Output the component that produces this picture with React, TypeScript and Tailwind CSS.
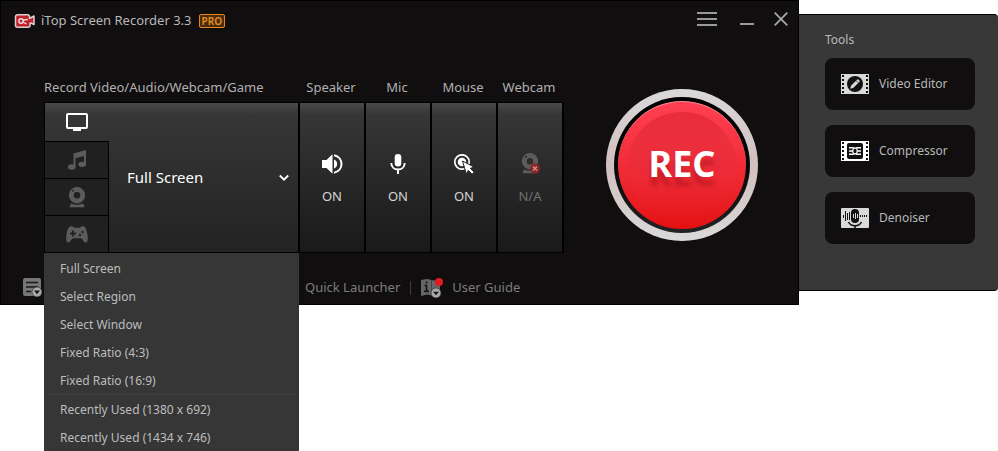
import { useState } from 'react'
import type { ReactNode } from 'react'

const recentSizes = ['Recently Used (1380 x 692)', 'Recently Used (1434 x 746)']
const captureModes = ['Full Screen', 'Select Region', 'Select Window', 'Fixed Ratio (4:3)', 'Fixed Ratio (16:9)']

function LogoIcon() {
  return (
    <svg width="22" height="16" viewBox="0 0 22 16" aria-hidden="true">
      <path d="M3.500 1.800h10a2 2 0 0 1 2 2v1.700l4.500-2.500v8.500l-3-1.500-1 .5v1.700a2 2 0 0 1-2 2H3.500a2 2 0 0 1-2-2v-8.400a2 2 0 0 1 2-2z" fill="#c4202c" stroke="#d6d2d2" strokeWidth="1.500" strokeLinejoin="round" />
      <circle cx="7" cy="8" r="2.200" fill="none" stroke="#e8dede" strokeWidth="1.400" />
      <path d="M8.800 9l3.700 2M8.800 7c2 0 3-.5 5-.5" fill="none" stroke="#e8dede" strokeWidth="1.400" />
    </svg>
  )
}

function MonitorIcon() {
  return (
    <svg width="22" height="18" viewBox="0 0 22 18" aria-hidden="true">
      <rect x="1" y="1" width="20" height="14" rx="1" fill="none" stroke="#fff" strokeWidth="2" />
      <path d="M7 15h8v3H7z" fill="#fff" />
    </svg>
  )
}

function MusicIcon() {
  return (
    <svg width="20" height="20" viewBox="0 0 20 20" fill="#5c5c5c" aria-hidden="true">
      <path d="M6.500 3.500L19 0v14h-2V6L8.500 8.300V17h-2z" />
      <ellipse cx="4.700" cy="17" rx="3.800" ry="2.700" />
      <ellipse cx="15.200" cy="14.300" rx="3.800" ry="2.600" />
    </svg>
  )
}

function WebcamIcon({ muted = false }: { muted?: boolean }) {
  return (
    <svg width="20" height="21" viewBox="0 0 20 21" aria-hidden="true">
      <path d="M10 0a8.200 8.200 0 1 1 0 16.400A8.200 8.200 0 0 1 10 0zm0 5a3.300 3.300 0 1 0 0 6.600A3.300 3.300 0 0 0 10 5z" fill="#5c5c5c" />
      <circle cx="6" cy="3.800" r="1" fill="#262626" />
      <path d="M4 16.500c4 1.700 8 1.700 12 0l1.700 3.700H2.300z" fill="#5c5c5c" />
      {muted && (
        <g>
          <circle cx="15" cy="15.500" r="4.900" fill="#8f2424" />
          <path d="M13 13.500l4 4m0-4l-4 4" stroke="#c09a9a" strokeWidth="1.200" />
        </g>
      )}
    </svg>
  )
}

function GamepadIcon() {
  return (
    <svg width="22" height="17" viewBox="0 0 22 17" aria-hidden="true">
      <path d="M5 .3c1.500 0 2 .5 3 1.400h6C15 .8 15.500.3 17 .3c3 0 4.600 6.500 4.800 12 0 2.500-.6 4.200-2.100 4.200-2 0-3-4.300-5.200-4.300h-7c-2.200 0-3.200 4.300-5.200 4.300-1.500 0-2.100-1.700-2.100-4.200C.4 6.800 2 .3 5 .3z" fill="#5c5c5c" />
      <path d="M7 4.500v6M4 7.500h6" stroke="#222" strokeWidth="1.800" />
      <g fill="#222">
        <circle cx="16.500" cy="6" r="1.200" />
        <circle cx="14" cy="9" r="1.200" />
      </g>
    </svg>
  )
}

function SpeakerIcon() {
  return (
    <svg width="22" height="20" viewBox="0 0 22 20" aria-hidden="true">
      <path d="M1 6h4.500L11.500.3v19.400l-6-5.700H1z" fill="#fff" />
      <path d="M13 5.500a4.800 4.800 0 0 1 0 9z" fill="#fff" />
      <path d="M13 1.300c10 2 10 15.400 0 17.400" fill="none" stroke="#fff" strokeWidth="2" />
    </svg>
  )
}

function MicIcon() {
  return (
    <svg width="16" height="20" viewBox="0 0 16 20" aria-hidden="true">
      <rect x="4.700" y="0" width="6.600" height="12.500" rx="3.300" fill="#fff" />
      <path d="M1.300 9c0 8.700 13.400 8.700 13.400 0M8 15.500V20" fill="none" stroke="#fff" strokeWidth="1.900" />
    </svg>
  )
}

function MouseIcon() {
  return (
    <svg width="22" height="20" viewBox="0 0 22 20" aria-hidden="true">
      <circle cx="9" cy="8" r="7.200" fill="none" stroke="#fff" strokeWidth="1.700" />
      <circle cx="9" cy="8" r="4.300" fill="#fff" />
      <path d="M9.500 7l11.500 6-3.600 1.400 3.800 3.800-2.200 2-3.700-3.800-2 3.600z" fill="#fff" stroke="#252525" strokeWidth="1" />
    </svg>
  )
}

// film strip frame shared by the editor and compressor icons
function FilmStrip({ fill, children }: { fill: string; children: ReactNode }) {
  return (
    <svg width="28" height="20" viewBox="0 0 28 20" aria-hidden="true">
      <path d="M0 0h28v20H0z" fill={fill} />
      <path d="M2 1v18M26 1v18" stroke="#111" strokeWidth="2" strokeDasharray="2 2" />
      {children}
    </svg>
  )
}

function VideoEditorIcon() {
  return (
    <FilmStrip fill="#d9d9d9">
      <circle cx="14" cy="10" r="8" fill="#111" />
      <path d="M9.200 14.800l.8-3 6.800-6.800 2.200 2.200-6.800 6.800z" fill="#d9d9d9" />
      <path d="M15 6.500l2.400 2.400" stroke="#111" strokeWidth=".7" />
    </FilmStrip>
  )
}

function CompressorIcon() {
  return (
    <FilmStrip fill="#fff">
      <rect x="6" y="2" width="16" height="16" rx="2" fill="#111" />
      <path d="M8 6.700h4l1.500 1M8 10h4M8 13.300h4l1.500-1M20 6.700h-4l-1.500 1M20 10h-4M20 13.300h-4l-1.500-1" fill="none" stroke="#fff" strokeWidth="1.400" />
      <ellipse cx="14" cy="10" rx="2.200" ry="3" fill="none" stroke="#fff" strokeWidth="1.100" />
    </FilmStrip>
  )
}

function DenoiserIcon() {
  return (
    <svg width="28" height="20" viewBox="0 0 28 20" aria-hidden="true">
      <rect width="28" height="20" rx="1" fill="#d9d9d9" />
      <path d="M2.500 7v3M4.500 3v10M6.500 5v7M8.500 4v8M19.500 7v2M21.500 7v2M23.500 7v2M25.500 7v2" stroke="#111" />
      <rect x="10" y="1" width="8" height="14" rx="4" fill="#111" />
      <path d="M12.500 6v4M14.500 5v6M16.500 6v4" stroke="#d9d9d9" />
      <path d="M7.500 14c2.500 5 10.500 5 13 0M14 17.500V20" fill="none" stroke="#111" strokeWidth="1.600" />
    </svg>
  )
}

function HistoryIcon() {
  return (
    <svg width="20" height="20" viewBox="0 0 20 20" aria-hidden="true">
      <rect x="1" y="0" width="18" height="18" rx="2" fill="#777" />
      <path d="M4 4.500h12M4 9h12M4 13.500h5" stroke="#181818" strokeWidth="1.500" />
      <circle cx="15" cy="14" r="5" fill="#aaa" stroke="#222" strokeWidth=".6" />
      <path d="M12 12.600h6L15 16.300z" fill="#181818" />
    </svg>
  )
}

function GuideIcon() {
  return (
    <svg width="22" height="20" viewBox="0 0 22 20" aria-hidden="true">
      <path d="M0 2l6-1 7 1.500L19 1v16l-6 1-7-1.500L0 18z" fill="#666" />
      <path d="M10.500 2v15" stroke="#444" />
      <path d="M3.500 7.500h2v5.500M3 13.300h5M5.500 3.500v2" fill="none" stroke="#151515" strokeWidth="1.700" />
      <circle cx="15" cy="15" r="5" fill="#aaa" stroke="#222" strokeWidth=".6" />
      <path d="M12 13.800h6L15 17.300z" fill="#181818" />
      <circle cx="18" cy="4" r="4" fill="#e31b23" />
    </svg>
  )
}

const sourceTabs = [
  { label: 'Audio', icon: <MusicIcon /> },
  { label: 'Webcam', icon: <WebcamIcon /> },
  { label: 'Game', icon: <GamepadIcon /> },
]

const devices = [
  { label: 'Speaker', state: 'ON', icon: <SpeakerIcon /> },
  { label: 'Mic', state: 'ON', icon: <MicIcon /> },
  { label: 'Mouse', state: 'ON', icon: <MouseIcon /> },
  { label: 'Webcam', state: 'N/A', icon: <WebcamIcon muted /> },
]

const tools = [
  { label: 'Video Editor', icon: <VideoEditorIcon /> },
  { label: 'Compressor', icon: <CompressorIcon /> },
  { label: 'Denoiser', icon: <DenoiserIcon /> },
]

function TitleBar() {
  return (
    <header className="flex h-10 items-center pr-[10px] pl-[13px]">
      <LogoIcon />
      <h1 className="ml-[5px] text-[13px] text-[#b9b9b9]">iTop Screen Recorder 3.3</h1>
      <span className="ml-[7px] flex h-[14px] items-center rounded-xs border border-[#e8861a] bg-[#4a2c10] px-[2px] text-[10px] font-semibold text-[#e8921a]">
        PRO
      </span>
      <div className="ml-auto flex items-center pb-[5px]">
        <button aria-label="Menu" className="mr-[23px]">
          <svg width="20" height="14" viewBox="0 0 20 14">
            <path d="M0 1h20M0 7h20M0 13h20" stroke="#9a9a9a" strokeWidth="2" />
          </svg>
        </button>
        <button aria-label="Minimize" className="mr-5">
          <svg width="14" height="14" viewBox="0 0 14 14">
            <path d="M0 12h14" stroke="#9a9a9a" strokeWidth="2" />
          </svg>
        </button>
        <button aria-label="Close">
          <svg width="14" height="14" viewBox="0 0 14 14">
            <path d="M.7.7l12.600 12.600M13.300.7L.7 13.300" stroke="#a6a6a6" strokeWidth="1.800" />
          </svg>
        </button>
      </div>
    </header>
  )
}

function ModeMenu({ onPick }: { onPick: (mode: string) => void }) {
  const item = 'block h-7 w-full px-4 pt-[2px] text-left text-xs text-[#bdbdbd] hover:bg-[#454545]'

  return (
    <div className="absolute top-full -left-px z-10 mt-px w-[255px] bg-[#363636] pt-px">
      {captureModes.map((mode) => (
        <button key={mode} className={item} onClick={() => onPick(mode)}>
          {mode}
        </button>
      ))}
      <div className="mx-[2px] h-px bg-[#404040]" />
      {recentSizes.map((size) => (
        <button key={size} className={item} onClick={() => onPick(size)}>
          {size}
        </button>
      ))}
    </div>
  )
}

function SourcePanel() {
  const [mode, setMode] = useState('Full Screen')

  return (
    <div className="relative flex h-[151px] w-[256px] border border-r-2 border-black bg-linear-to-b from-[#4a4a4a] via-[#363636] via-8% to-[#232323]">
      <div className="flex w-16 shrink-0 flex-col">
        <button aria-label="Screen" className="flex h-[38px] items-center justify-center">
          <MonitorIcon />
        </button>
        {sourceTabs.map((tab) => (
          <button
            key={tab.label}
            aria-label={tab.label}
            className="flex flex-1 items-center justify-center border-t border-r border-black bg-[#202020]"
          >
            {tab.icon}
          </button>
        ))}
      </div>
      <div className="flex min-w-0 flex-1 items-center pr-[9px]">
        <select
          aria-label="Capture mode"
          value={mode}
          onChange={(e) => setMode(e.target.value)}
          className="h-full min-w-0 flex-1 appearance-none bg-transparent pl-[18px] text-[15px] text-white outline-none"
        >
          {[...captureModes, ...recentSizes].map((option) => (
            <option key={option}>{option}</option>
          ))}
        </select>
        <svg width="10" height="8" viewBox="0 0 10 8" aria-hidden="true">
          <path d="M.8 1.500L5 5.700l4.200-4.200" fill="none" stroke="#fff" strokeWidth="1.900" />
        </svg>
      </div>
      <ModeMenu onPick={setMode} />
    </div>
  )
}

function RecButton() {
  return (
    <button className="size-[152px] rounded-full bg-linear-to-b from-[#d9d9d9] via-[#d2bfbf] to-[#d9d9d9] p-2">
      <span className="block size-full rounded-full bg-linear-to-b from-black to-[#242424] p-1">
        <span className="block size-full rounded-full border-t border-[#ff8a92] bg-linear-to-b from-[#ff3f52] to-[#e40f0f] p-[10px]">
          <span className="flex size-full items-center justify-center rounded-full bg-linear-to-b from-[#e82c3b] to-[#e8101000] pb-1 text-4xl font-bold text-white text-shadow-[0_9px_4px_#a0101880]">
            REC
          </span>
        </span>
      </span>
    </button>
  )
}

function Footer() {
  return (
    <footer className="mt-auto flex h-9 items-center pt-[3px] pl-[21px] text-[13px] text-[#7d7d7d]">
      <button aria-label="History" className="mr-[263px]">
        <HistoryIcon />
      </button>
      <button>Quick Launcher</button>
      <span className="mx-[10px] h-[14px] w-px bg-[#3c3c3c]" />
      <button className="flex items-center gap-[9px]">
        <GuideIcon />
        User Guide
      </button>
    </footer>
  )
}

function ToolsPanel() {
  return (
    <aside className="mt-[14px] w-[199px] rounded-r border-y border-black bg-[#383838] pt-4 pr-[23px] pb-[46px] pl-[26px] text-xs text-[#b9b9b9]">
      <h2 className="mb-[9px] leading-[18px]">Tools</h2>
      <div className="flex flex-col gap-[15px]">
        {tools.map((tool) => (
          <button key={tool.label} className="flex h-[52px] items-center gap-[10px] rounded-lg bg-[#100e0f] px-4">
            {tool.icon}
            {tool.label}
          </button>
        ))}
      </div>
    </aside>
  )
}

export default function App() {
  return (
    <div className="flex min-h-screen items-start bg-white font-['Noto_Sans','Open_Sans',sans-serif]">
      <main className="flex min-h-[305px] flex-1 flex-col border border-black bg-[#100e0f]">
        <TitleBar />
        <div className="mt-9 flex items-start pl-[43px]">
          <section>
            <h2 className="h-[25px] text-[13px] leading-5 text-[#b0b0b0]">Record Video/Audio/Webcam/Game</h2>
            <SourcePanel />
          </section>
          {devices.map((device) => (
            <section key={device.label} className="w-[66px]">
              <h2 className="h-[25px] pr-1 text-center text-[13px] leading-5 whitespace-nowrap text-[#b0b0b0]">
                {device.label}
              </h2>
              <button
                disabled={device.state === 'N/A'}
                className="flex h-[151px] w-full flex-col items-center justify-center gap-3 border-y border-r-2 border-black bg-linear-to-b from-[#4a4a4a] via-[#363636] via-8% to-[#191919] pt-1 text-[13px] leading-5 text-[#d6d6d6] disabled:text-[#707070]"
              >
                {device.icon}
                {device.state}
              </button>
            </section>
          ))}
          <div className="flex flex-1 justify-center pt-3 pl-[2px]">
            <RecButton />
          </div>
        </div>
        <Footer />
      </main>
      <ToolsPanel />
    </div>
  )
}
